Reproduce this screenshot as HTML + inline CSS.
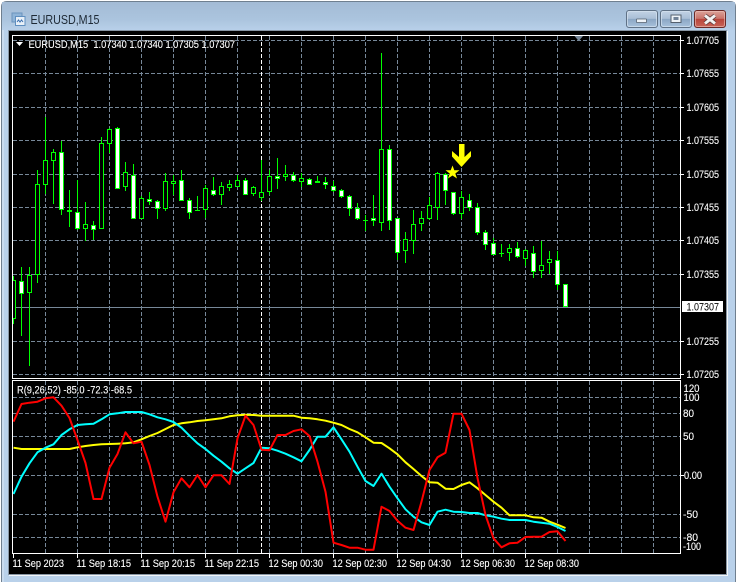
<!DOCTYPE html>
<html>
<head>
<meta charset="utf-8">
<title>EURUSD,M15</title>
<style>
html,body{margin:0;padding:0;width:738px;height:582px;overflow:hidden;background:#fff}
svg{display:block;position:absolute;left:0;top:0}
text{font-family:"Liberation Sans",sans-serif;font-size:11px;fill:#fff;stroke:#fff;stroke-width:.12}
</style>
</head>
<body>
<svg width="738" height="582" viewBox="0 0 738 582" xmlns="http://www.w3.org/2000/svg">
<defs>
<linearGradient id="tb" x1="0" y1="0" x2="0" y2="1"><stop offset="0" stop-color="#a3bbd5"/><stop offset=".6" stop-color="#abc4de"/><stop offset="1" stop-color="#b9d1ea"/></linearGradient>
<linearGradient id="b1" x1="0" y1="0" x2="0" y2="1"><stop offset="0" stop-color="#c3d3e5"/><stop offset=".48" stop-color="#a9bed6"/><stop offset=".5" stop-color="#8ba6c4"/><stop offset="1" stop-color="#a9c3dd"/></linearGradient>
<linearGradient id="b2" x1="0" y1="0" x2="0" y2="1"><stop offset="0" stop-color="#dca59b"/><stop offset=".48" stop-color="#c9736a"/><stop offset=".5" stop-color="#b8443a"/><stop offset="1" stop-color="#c9655a"/></linearGradient>
<clipPath id="cp"><rect x="13" y="36" width="667" height="342"/></clipPath>
</defs>

<!-- window chrome -->
<rect x="0" y="0" width="738" height="582" fill="#fff"/>
<path d="M1.5 582V7Q1.5 1.5 7 1.5H730Q735.5 1.5 735.5 7V582" fill="#b9d1ea" stroke="#6f7f8f"/>
<rect x="2" y="2" width="733" height="29" fill="url(#tb)"/>
<rect x="2.5" y="30" width="1" height="552" fill="#dbe8f4"/>

<!-- title icon -->
<rect x="12" y="13" width="10" height="9" fill="#8fb4d8" stroke="#6b93bd"/>
<rect x="15.5" y="16.5" width="9.5" height="9" fill="#e8f0f8" stroke="#5f8fc0"/>
<path d="M17 22l1.5-2 1.5 2 1.5-2 1.5 2" fill="none" stroke="#3a70b0"/>
<text x="30.5" y="24" style="font-size:12.5px;fill:#1e2a36;stroke:none" textLength="69" lengthAdjust="spacingAndGlyphs">EURUSD,M15</text>

<!-- buttons -->
<rect x="626.5" y="10.5" width="31" height="17" rx="2.5" fill="url(#b1)" stroke="#5f7186"/>
<rect x="627.5" y="11.5" width="29" height="15" rx="2" fill="none" stroke="#d5e2ef" stroke-opacity=".7"/>
<rect x="636.5" y="19" width="10" height="3.5" rx=".5" fill="#eef3f8" stroke="#54606e" stroke-width=".8"/>
<rect x="660.5" y="10.5" width="31" height="17" rx="2.5" fill="url(#b1)" stroke="#5f7186"/>
<rect x="661.5" y="11.5" width="29" height="15" rx="2" fill="none" stroke="#d5e2ef" stroke-opacity=".7"/>
<rect x="671" y="15" width="10" height="7.5" fill="#eef3f8" stroke="#54606e"/>
<rect x="673.5" y="17" width="5" height="3" fill="#6f8196"/>
<rect x="694.5" y="10.5" width="31" height="17" rx="2.5" fill="url(#b2)" stroke="#6a2a28"/>
<rect x="695.5" y="11.5" width="29" height="15" rx="2" fill="none" stroke="#eec3bb" stroke-opacity=".6"/>
<path d="M705 15.5l10 8M715 15.5l-10 8" stroke="#5a3a3a" stroke-width="4.4"/>
<path d="M705 15.5l10 8M715 15.5l-10 8" stroke="#f2f2f2" stroke-width="3"/>

<!-- client area -->
<rect x="8.5" y="30.5" width="718" height="544" fill="#000" stroke="#8896a4"/>
<path d="M9 575.5H727.5V31" fill="none" stroke="#f2f5f8"/>

<!-- grid -->
<g stroke="#778899" fill="none" stroke-dasharray="4 2">
<path d="M13 40.5H680M13 73.5H680M13 107.5H680M13 140.5H680M13 174.5H680M13 207.5H680M13 240.5H680M13 274.5H680M13 341.5H680M13 374.5H680"/>
<path d="M45.5 36V378M77.5 36V378M109.5 36V378M141.5 36V378M173.5 36V378M205.5 36V378M237.5 36V378M269.5 36V378M301.5 36V378M333.5 36V378M365.5 36V378M397.5 36V378M429.5 36V378M461.5 36V378M493.5 36V378M525.5 36V378M557.5 36V378M589.5 36V378M621.5 36V378M653.5 36V378"/>
<path d="M13 397.5H680M13 413.5H680M13 436.5H680M13 475.5H680M13 514.5H680M13 537.5H680"/>
<path d="M45.5 381V553M77.5 381V553M109.5 381V553M141.5 381V553M173.5 381V553M205.5 381V553M237.5 381V553M269.5 381V553M301.5 381V553M333.5 381V553M365.5 381V553M397.5 381V553M429.5 381V553M461.5 381V553M493.5 381V553M525.5 381V553M557.5 381V553M589.5 381V553M621.5 381V553M653.5 381V553"/>
</g>
<path d="M261.5 36V378M261.5 381V553" stroke="#fff" stroke-dasharray="4 2" fill="none"/>
<path d="M13 307.5H680" stroke="#778899"/>

<!-- candles -->
<g clip-path="url(#cp)" shape-rendering="crispEdges">
<path fill="none" stroke="#00ff00" d="M13.5 276V324M21.5 267V336M29.5 267V366M37.5 170V283M45.5 117V194M53.5 149V204M61.5 141V215M69.5 190V227M77.5 180V230M85.5 202V241M93.5 221V240M101.5 137V229M109.5 128V153M117.5 127V189M125.5 162V191M133.5 164V218M141.5 196V218M149.5 192V205M157.5 200V219M165.5 173V211M173.5 175V195M181.5 170V201M189.5 198V219M197.5 196V211M205.5 185V218M213.5 177V196M221.5 182V205M229.5 180V191M237.5 175V187M245.5 178V195M253.5 186V196M261.5 160V201M269.5 170V195M277.5 158V189M285.5 165V181M293.5 172V182M301.5 173V187M309.5 178V185M317.5 176V183M325.5 177V189M333.5 181V192M341.5 189V198M349.5 195V216M357.5 203V220M365.5 215V231M373.5 195V226M381.5 53V231M389.5 145V230M397.5 218V260M405.5 232V263M413.5 210V254M421.5 211V231M429.5 197V220M437.5 172V220M445.5 173V205M453.5 192V215M461.5 191V219M469.5 194V211M477.5 203V235M485.5 230V250M493.5 238V255M501.5 244V257M509.5 244V261M517.5 242V258M525.5 249V266M533.5 246V278M541.5 241V278M549.5 251V274M557.5 251V290"/>
<path fill="none" stroke="#00ff00" d="M67 210.5h5M67 211.5h5M195 210.5h5M315 181.5h5M315 182.5h5M363 220.5h5M499 253.5h5"/>
<path fill="#000" stroke="#00ff00" d="M11.5 280.5h4V318.5h-4zM27.5 275.5h4V292.5h-4zM35.5 184.5h4V274.5h-4zM43.5 160.5h4V184.5h-4zM51.5 152.5h4V160.5h-4zM83.5 224.5h4V228.5h-4zM99.5 143.5h4V228.5h-4zM107.5 129.5h4V143.5h-4zM123.5 172.5h4V186.5h-4zM139.5 198.5h4V218.5h-4zM163.5 181.5h4V208.5h-4zM171.5 181.5h4V183.5h-4zM203.5 188.5h4V209.5h-4zM219.5 186.5h4V194.5h-4zM227.5 184.5h4V187.5h-4zM235.5 180.5h4V186.5h-4zM251.5 187.5h4V193.5h-4zM259.5 192.5h4V197.5h-4zM267.5 176.5h4V191.5h-4zM283.5 174.5h4V176.5h-4zM299.5 178.5h4V181.5h-4zM379.5 149.5h4V222.5h-4zM403.5 239.5h4V250.5h-4zM411.5 224.5h4V240.5h-4zM419.5 218.5h4V223.5h-4zM427.5 205.5h4V218.5h-4zM435.5 173.5h4V207.5h-4zM459.5 197.5h4V213.5h-4zM507.5 248.5h4V252.5h-4zM523.5 250.5h4V258.5h-4zM539.5 265.5h4V270.5h-4zM547.5 259.5h4V262.5h-4z"/>
<path fill="#fff" stroke="#00ff00" d="M19.5 281.5h4V293.5h-4zM59.5 152.5h4V209.5h-4zM75.5 212.5h4V228.5h-4zM91.5 225.5h4V229.5h-4zM115.5 128.5h4V188.5h-4zM131.5 175.5h4V218.5h-4zM147.5 199.5h4V201.5h-4zM155.5 201.5h4V208.5h-4zM179.5 180.5h4V200.5h-4zM187.5 200.5h4V212.5h-4zM211.5 190.5h4V194.5h-4zM243.5 180.5h4V194.5h-4zM275.5 176.5h4V178.5h-4zM291.5 175.5h4V180.5h-4zM307.5 179.5h4V184.5h-4zM323.5 182.5h4V184.5h-4zM331.5 186.5h4V190.5h-4zM339.5 190.5h4V196.5h-4zM347.5 196.5h4V208.5h-4zM355.5 208.5h4V218.5h-4zM371.5 218.5h4V220.5h-4zM387.5 149.5h4V220.5h-4zM395.5 218.5h4V252.5h-4zM443.5 174.5h4V190.5h-4zM451.5 192.5h4V213.5h-4zM467.5 200.5h4V207.5h-4zM475.5 207.5h4V232.5h-4zM483.5 232.5h4V244.5h-4zM491.5 243.5h4V254.5h-4zM515.5 248.5h4V256.5h-4zM531.5 253.5h4V271.5h-4zM555.5 260.5h4V284.5h-4zM563.5 284.5h4V306.5h-4z"/>
</g>

<!-- arrow and star -->
<path d="M459 144H464.5V157L471 151V156.5L461.5 167L452 156.5V151L459 157Z" fill="#ffff00"/>
<path d="M452.5 165.5L454.3 170.3H459.5L455.3 173.5L457 178.5L452.5 175.5L448 178.5L449.7 173.5L445.5 170.3H450.7Z" fill="#ffff00"/>

<!-- indicator lines -->
<g fill="none" stroke-width="2" stroke-linejoin="round">
<polyline stroke="#ffff00" points="13.5,447.7 21.5,449 29.5,449 37.5,449 45.5,449 53.5,449 61.5,449 69.5,449 77.5,447.3 85.5,446 93.5,445 101.5,444.3 109.5,444 117.5,443.7 125.5,443.3 133.5,442.3 141.5,439.3 149.5,436 157.5,433 165.5,429 173.5,425 181.5,423.3 189.5,422.3 197.5,421 205.5,420.3 213.5,419.3 221.5,418.3 229.5,416.3 237.5,415.3 245.5,414.7 253.5,415 261.5,415.7 269.5,415.7 277.5,415.7 285.5,415.7 293.5,415.7 301.5,417.7 309.5,418.3 317.5,419.3 325.5,420.7 333.5,422.7 341.5,425 349.5,429 357.5,432.3 365.5,437.3 373.5,442.7 381.5,443 389.5,448.3 397.5,454.3 405.5,462.3 413.5,469 421.5,476 429.5,482.3 437.5,482.7 445.5,488.7 453.5,489 461.5,485 469.5,482.3 477.5,488.3 485.5,495 493.5,501.7 501.5,507.7 509.5,515.3 517.5,515.3 525.5,515.3 533.5,517.3 541.5,517.7 549.5,521.7 557.5,524.7 565.5,528"/>
<polyline stroke="#00ffff" points="13.5,494 21.5,476.7 29.5,463.3 37.5,452.3 45.5,447.7 53.5,444.3 61.5,435 69.5,429.3 77.5,425 85.5,424.3 93.5,423.7 101.5,419.3 109.5,414.3 117.5,413.3 125.5,412 133.5,412 141.5,412 149.5,414.3 157.5,417.3 165.5,419.3 173.5,422 181.5,427.7 189.5,435.7 197.5,443.3 205.5,449 213.5,455.7 221.5,461.7 229.5,468.3 237.5,473.7 245.5,468.3 253.5,463 261.5,447.7 269.5,448.3 277.5,450.7 285.5,453.7 293.5,457.3 301.5,461.3 309.5,450 317.5,436.7 325.5,436.7 333.5,427.3 341.5,439.3 349.5,451.7 357.5,466.7 365.5,481 373.5,486 381.5,473.7 389.5,486.7 397.5,498.3 405.5,509.3 413.5,516.7 421.5,522.3 429.5,525 437.5,511.7 445.5,509.7 453.5,511.7 461.5,512 469.5,513 477.5,513 485.5,515.3 493.5,516.7 501.5,518.7 509.5,520 517.5,520 525.5,520 533.5,521.7 541.5,522.7 549.5,523.7 557.5,527 565.5,531"/>
<polyline stroke="#ff0000" points="13.5,421.7 21.5,404 29.5,402.7 37.5,401.7 45.5,398.3 53.5,397.3 61.5,405.7 69.5,418 77.5,440 85.5,463 93.5,499 101.5,499 109.5,467.7 117.5,454 125.5,432.3 133.5,443.3 141.5,441.7 149.5,465 157.5,496.7 165.5,521.7 173.5,492.3 181.5,478.3 189.5,487.3 197.5,475 205.5,487.3 213.5,475.3 221.5,475.3 229.5,484 237.5,438.3 245.5,415.7 253.5,425 261.5,449.7 269.5,450.3 277.5,435 285.5,435 293.5,431 301.5,429.3 309.5,436 317.5,461.7 325.5,491.7 333.5,542.7 341.5,545 349.5,547.7 357.5,547.7 365.5,549.7 373.5,549.7 381.5,506.7 389.5,511 397.5,520.7 405.5,527.7 413.5,530 421.5,501.7 429.5,470 437.5,457.3 445.5,452.7 453.5,413.7 461.5,413.7 469.5,430 477.5,478 485.5,515 493.5,538.3 501.5,547.3 509.5,543.3 517.5,542.7 525.5,537 533.5,536.7 541.5,536.7 549.5,532 557.5,531.3 565.5,541"/>
</g>

<!-- frames -->
<rect x="12.5" y="35.5" width="668" height="343" fill="none" stroke="#fff"/>
<rect x="12.5" y="380.5" width="668" height="173" fill="none" stroke="#fff"/>
<path d="M16 42H23L19.5 46Z" fill="#fff"/>
<path d="M574.5 36H583L578.7 41Z" fill="#778899"/>

<!-- ticks -->
<path stroke="#fff" d="M681 40.5h3M681 73.5h3M681 107.5h3M681 140.5h3M681 174.5h3M681 207.5h3M681 240.5h3M681 274.5h3M681 341.5h3M681 374.5h3M681 475.5h3M13.5 554v4M77.5 554v4M141.5 554v4M205.5 554v4M269.5 554v4M333.5 554v4M397.5 554v4M461.5 554v4M525.5 554v4"/>

<!-- labels -->
<text x="28.5" y="48" textLength="206.5" lengthAdjust="spacingAndGlyphs" xml:space="preserve">EURUSD,M15  1.07340 1.07340 1.07305 1.07307</text>
<text x="17" y="393.5" textLength="115" lengthAdjust="spacingAndGlyphs">R(9,26,52) -85.0 -72.3 -68.5</text>

<g>
<text x="686.5" y="44" textLength="32.5" lengthAdjust="spacingAndGlyphs">1.07705</text>
<text x="686.5" y="77" textLength="32.5" lengthAdjust="spacingAndGlyphs">1.07655</text>
<text x="686.5" y="111" textLength="32.5" lengthAdjust="spacingAndGlyphs">1.07605</text>
<text x="686.5" y="144" textLength="32.5" lengthAdjust="spacingAndGlyphs">1.07555</text>
<text x="686.5" y="178" textLength="32.5" lengthAdjust="spacingAndGlyphs">1.07505</text>
<text x="686.5" y="211" textLength="32.5" lengthAdjust="spacingAndGlyphs">1.07455</text>
<text x="686.5" y="244" textLength="32.5" lengthAdjust="spacingAndGlyphs">1.07405</text>
<text x="686.5" y="278" textLength="32.5" lengthAdjust="spacingAndGlyphs">1.07355</text>
<text x="686.5" y="345" textLength="32.5" lengthAdjust="spacingAndGlyphs">1.07255</text>
<text x="686.5" y="378" textLength="32.5" lengthAdjust="spacingAndGlyphs">1.07205</text>
</g>
<rect x="682" y="301" width="41" height="11" fill="#fff"/>
<text x="686.5" y="310.5" style="fill:#000;stroke:none" textLength="32.5" lengthAdjust="spacingAndGlyphs">1.07307</text>

<g>
<text x="683.5" y="392" textLength="16" lengthAdjust="spacingAndGlyphs">120</text>
<text x="683.5" y="401" textLength="16" lengthAdjust="spacingAndGlyphs">100</text>
<text x="683" y="417" textLength="11" lengthAdjust="spacingAndGlyphs">80</text>
<text x="683" y="440" textLength="11" lengthAdjust="spacingAndGlyphs">50</text>
<text x="684" y="479" textLength="18" lengthAdjust="spacingAndGlyphs">0.00</text>
<text x="683" y="518" textLength="15" lengthAdjust="spacingAndGlyphs">-50</text>
<text x="683" y="541" textLength="15" lengthAdjust="spacingAndGlyphs">-80</text>
<text x="683" y="550" textLength="18" lengthAdjust="spacingAndGlyphs">-100</text>
</g>

<g>
<text x="12.5" y="567" textLength="51.5" lengthAdjust="spacingAndGlyphs">11 Sep 2023</text>
<text x="76.5" y="567" textLength="54.5" lengthAdjust="spacingAndGlyphs">11 Sep 18:15</text>
<text x="140.5" y="567" textLength="54.5" lengthAdjust="spacingAndGlyphs">11 Sep 20:15</text>
<text x="204.5" y="567" textLength="54.5" lengthAdjust="spacingAndGlyphs">11 Sep 22:15</text>
<text x="268.5" y="567" textLength="54.5" lengthAdjust="spacingAndGlyphs">12 Sep 00:30</text>
<text x="332.5" y="567" textLength="54.5" lengthAdjust="spacingAndGlyphs">12 Sep 02:30</text>
<text x="396.5" y="567" textLength="54.5" lengthAdjust="spacingAndGlyphs">12 Sep 04:30</text>
<text x="460.5" y="567" textLength="54.5" lengthAdjust="spacingAndGlyphs">12 Sep 06:30</text>
<text x="524.5" y="567" textLength="54.5" lengthAdjust="spacingAndGlyphs">12 Sep 08:30</text>
</g>
</svg>
</body>
</html>
